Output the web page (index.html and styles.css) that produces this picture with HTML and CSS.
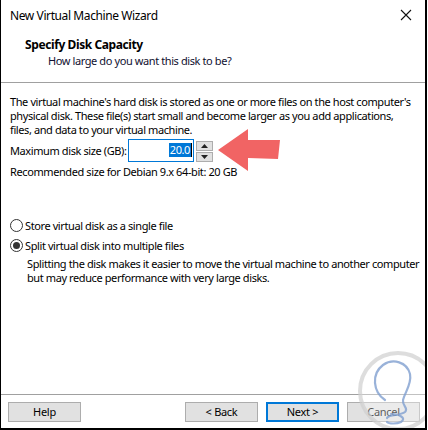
FILE: index.html
```html
<!DOCTYPE html>
<html>
<head>
<meta charset="utf-8">
<link rel="stylesheet" href="styles.css">
</head>
<body>
<div class="window">
  <div class="titlebar">
    <span class="title">New Virtual Machine Wizard</span>
    <svg class="close" width="12" height="12" viewBox="0 0 12 12"><path d="M1 1 L11 11 M11 1 L1 11" stroke="#111" stroke-width="1.1" fill="none"/></svg>
  </div>
  <div class="header">
    <div class="h-title">Specify Disk Capacity</div>
    <div class="h-sub">How large do you want this disk to be?</div>
  </div>
  <div class="sep"></div>
  <div class="content">
    <p class="desc">The virtual machine's hard disk is stored as one or more files on the host computer's physical disk. These file(s) start small and become larger as you add applications, files, and data to your virtual machine.</p>
    <div class="size-row">
      <span class="label">Maximum disk size (GB):</span>
      <div class="input"><span class="sel">20.0</span></div>
      <div class="spin">
        <div class="spin-btn"><svg width="7" height="4" viewBox="0 0 7 4"><path d="M3.5 0 L7 4 L0 4 Z" fill="#222"/></svg></div>
        <div class="spin-btn"><svg width="7" height="4" viewBox="0 0 7 4"><path d="M0 0 L7 0 L3.5 4 Z" fill="#222"/></svg></div>
      </div>
    </div>
    <p class="rec">Recommended size for Debian 9.x 64-bit: 20 GB</p>
    <div class="options">
      <label class="radio-row"><span class="radio"></span>Store virtual disk as a single file</label>
      <label class="radio-row"><span class="radio checked"></span>Split virtual disk into multiple files</label>
      <p class="note">Splitting the disk makes it easier to move the virtual machine to another computer but may reduce performance with very large disks.</p>
    </div>
  </div>
  <div class="sep"></div>
  <div class="footer">
    <button class="btn">Help</button>
    <div class="right-btns">
      <button class="btn">&lt; Back</button>
      <button class="btn primary">Next &gt;</button>
      <button class="btn">Cancel</button>
    </div>
  </div>
  <svg class="arrow" width="64" height="46" viewBox="0 0 64 46">
    <path d="M0 21 L30 0 L30 11 L62 11 L60 30 L30 29 L30 42 Z" fill="#f16464"/>
  </svg>
  <svg class="watermark" width="72" height="86" viewBox="0 0 72 86">
    <circle cx="40" cy="43" r="38" fill="#ffffff" fill-opacity="0.35" stroke="#cfcfcf" stroke-opacity="0.7" stroke-width="4"/>
    <path d="M27 52 C15 44 13 26 25 17 C35 10 49 14 52 26 C54 36 47 44 45 52 C44 58 51 60 47 64 C42 68 31 66 29 70 M33 66 C41 66 49 70 43 74 C39 76 31 76 29 74" stroke="#7f9fcf" stroke-width="2.2" fill="none" stroke-linecap="round" stroke-opacity="0.8"/>
  </svg>
</div>
</body>
</html>
```
FILE: styles.css
```css
html, body {
  margin: 0;
  padding: 0;
  background: #fff;
}
body {
  font-family: "Noto Sans", "Open Sans", sans-serif;
  font-size: 11px;
  letter-spacing: -0.4px;
  color: #000;
}
.window {
  position: relative;
  width: 427px;
  height: 430px;
  box-sizing: border-box;
  border-left: 1px solid #000;
  border-right: 2px solid #000;
  border-bottom: 2px solid #000;
  display: flex;
  flex-direction: column;
  overflow: hidden;
}
.titlebar {
  height: 30px;
  display: flex;
  align-items: center;
  justify-content: space-between;
  padding: 0 13px 0 9px;
  flex: none;
}
.title {
  font-size: 12px;
  color: #000;
}
.close {
  display: block;
}
.header {
  height: 52px;
  box-sizing: border-box;
  padding-top: 7px;
  flex: none;
}
.h-title {
  font-weight: bold;
  font-size: 12px;
  margin-left: 24px;
  line-height: 16px;
}
.h-sub {
  margin-left: 47px;
  line-height: 16px;
  color: #101030;
}
.sep {
  height: 1px;
  background: #a0a0a0;
  flex: none;
}
.content {
  flex: 1;
  padding: 12px 0 0 9px;
}
.desc {
  margin: 0;
  padding-right: 10px;
  line-height: 14px;
}
.size-row {
  display: flex;
  align-items: center;
  margin-top: 1px;
  height: 24px;
}
.label {
  width: 118px;
  flex: none;
}
.input {
  border: 1px solid #0078d7;
  display: flex;
  align-items: center;
  justify-content: flex-end;
  padding-right: 1px;
  box-sizing: border-box;
  width: 66px;
  height: 23px;
}
.sel {
  background: #0078d7;
  color: #fff;
  line-height: 14px;
  padding: 0 1px;
  border-right: 1px solid #000;
}
.spin {
  margin-left: 2px;
  display: flex;
  flex-direction: column;
  gap: 1px;
  margin-top: 3px;
}
.spin-btn {
  width: 17px;
  height: 10px;
  box-sizing: border-box;
  background: #e1e1e1;
  border: 1px solid #adadad;
  display: flex;
  align-items: center;
  justify-content: center;
}
.spin-btn svg {
  display: block;
}
.rec {
  margin: 3px 0 0;
  line-height: 14px;
}
.options {
  margin-top: 36px;
}
.radio-row {
  display: flex;
  align-items: center;
  height: 20px;
}
.radio {
  width: 13px;
  height: 13px;
  box-sizing: border-box;
  border: 1px solid #333;
  border-radius: 50%;
  margin-right: 2px;
  position: relative;
  background: #fff;
  flex: none;
}
.radio.checked::after {
  content: "";
  position: absolute;
  left: 2px;
  top: 2px;
  width: 7px;
  height: 7px;
  border-radius: 50%;
  background: #333;
}
.note {
  margin: 2px 0 0 17px;
  line-height: 14px;
}
.footer {
  height: 33px;
  flex: none;
  display: flex;
  align-items: center;
  justify-content: space-between;
  padding: 0 5px 0 7px;
}
.right-btns {
  display: flex;
  gap: 8px;
}
.btn {
  width: 73px;
  height: 20px;
  box-sizing: border-box;
  background: #e1e1e1;
  border: 1px solid #adadad;
  font-family: "Noto Sans", "Open Sans", sans-serif;
  font-size: 11px;
  letter-spacing: -0.3px;
  color: #000;
  padding: 0;
  margin: 0;
}
.btn.primary {
  border: 2px solid #0078d7;
}
.arrow {
  position: absolute;
  left: 217px;
  top: 129px;
}
.watermark {
  position: absolute;
  left: 357px;
  top: 348px;
  pointer-events: none;
}
```
